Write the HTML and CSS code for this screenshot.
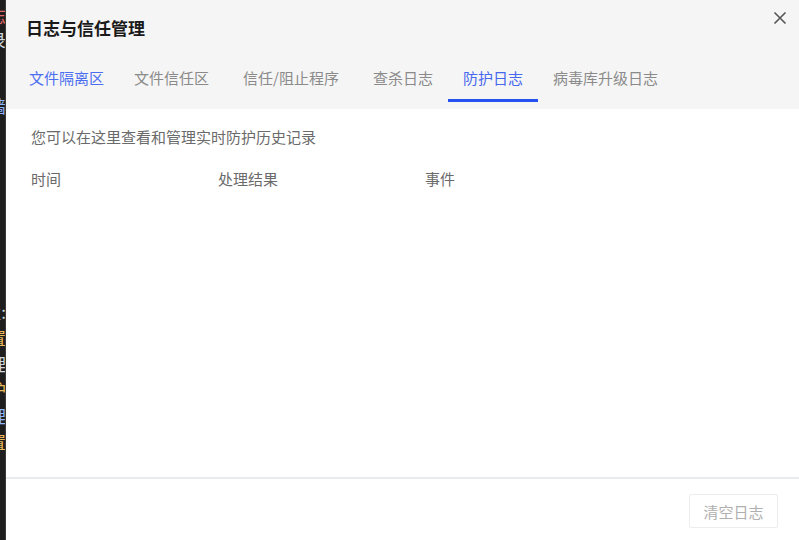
FILE: index.html
```html
<!DOCTYPE html>
<html lang="zh-CN">
<head>
  <meta charset="UTF-8" />
  <title>日志与信任管理</title>
  <link rel="stylesheet" href="styles.css">
</head>
<body>
  <div class="backdrop">
    <span class="bg-line red" style="top:6px">日志</span>
    <span class="bg-line" style="top:30px">记录</span>
    <span class="bg-line blue" style="top:96px">火墙</span>
    <span class="bg-line" style="top:302px">设置:</span>
    <span class="bg-line gold" style="top:328px">设置</span>
    <span class="bg-line" style="top:354px">管理</span>
    <span class="bg-line gold" style="top:380px">保护</span>
    <span class="bg-line blue" style="top:406px">管理</span>
    <span class="bg-line gold" style="top:432px">配置</span>
  </div>

  <div class="dialog">
    <div class="dialog-header">
      <div class="title-row">
        <h2 class="dialog-title">日志与信任管理</h2>
        <button class="close-btn" aria-label="关闭">
          <svg width="14" height="14" viewBox="0 0 14 14">
            <path d="M1.5 1.5 L12.5 12.5 M12.5 1.5 L1.5 12.5" stroke="#555" stroke-width="1.6" fill="none"/>
          </svg>
        </button>
      </div>
      <nav class="tabs">
        <a class="tab hover">文件隔离区</a>
        <a class="tab">文件信任区</a>
        <a class="tab wide">信任/阻止程序</a>
        <a class="tab">查杀日志</a>
        <a class="tab active">防护日志</a>
        <a class="tab">病毒库升级日志</a>
      </nav>
    </div>

    <div class="dialog-body">
      <p class="desc">您可以在这里查看和管理实时防护历史记录</p>
      <div class="log-table">
        <div class="log-head">
          <span>时间</span>
          <span>处理结果</span>
          <span>事件</span>
        </div>
      </div>
    </div>

    <div class="dialog-footer">
      <button class="btn" disabled>清空日志</button>
    </div>
  </div>
</body>
</html>
```

FILE: styles.css
```css
* { margin: 0; padding: 0; box-sizing: border-box; }
html, body { height: 100%; }
body {
  display: flex;
  font-family: "Noto Sans CJK SC", "Noto Sans", sans-serif;
  background: #1e1e1e;
  overflow: hidden;
}

/* app window behind the dialog, only a sliver shows */
.backdrop {
  position: relative;
  width: 6px; flex-shrink: 0;
  background: #1e1e1e;
  border-right: 1px solid #3a3a3a;
  overflow: hidden;
}
.bg-line {
  position: absolute; right: -1px;
  font-size: 17px; line-height: 20px;
  color: #cfd6de; white-space: nowrap;
}
.bg-line.red { color: #e06a6a; }
.bg-line.blue { color: #8fb4ff; }
.bg-line.gold { color: #e8b85a; }

.dialog {
  flex: 1;
  display: flex; flex-direction: column;
  background: #fff;
}

.dialog-header {
  background: #f5f5f5;
  height: 109px;
  padding-top: 16px;
}
.title-row {
  display: flex; justify-content: space-between; align-items: flex-start;
  padding: 0 12px 0 20px;
}
.dialog-title {
  font-size: 17px; line-height: 24px; font-weight: bold; color: #1a1a1a;
}
.close-btn {
  border: none; background: none; cursor: pointer;
  margin-top: -5px; padding: 0; line-height: 0;
}

.tabs {
  display: flex;
  margin-top: 15px;
  padding-left: 8px;
}
.tab {
  font-size: 15px; line-height: 22px;
  padding: 12px 15px 10px;
  color: #8a8a8a;
  border-bottom: 3px solid transparent;
  cursor: pointer;
}
.tab.wide { margin-left: 4px; margin-right: 4px; }
.tab.hover { color: #4b6ef0; }
.tab.active { color: #4668ee; border-bottom-color: #2451f0; }

.dialog-body {
  flex: 1;
  padding: 17px 25px 0;
}
.desc {
  font-size: 15px; line-height: 22px; color: #6a6a6a;
}
.log-table { margin-top: 20px; }
.log-head {
  display: grid;
  grid-template-columns: 187px 207px 1fr;
  font-size: 15px; line-height: 22px; color: #6a6a6a;
}

.dialog-footer {
  height: 63px;
  border-top: 2px solid #e8ebef;
  display: flex; justify-content: flex-end; align-items: flex-start;
  padding: 15px 21px 0 0;
}
.btn {
  width: 89px; height: 34px;
  font-family: inherit; font-size: 15px;
  color: #b0b0b0;
  background: #fff;
  border: 1px solid #ededed;
  border-radius: 2px;
}
```
